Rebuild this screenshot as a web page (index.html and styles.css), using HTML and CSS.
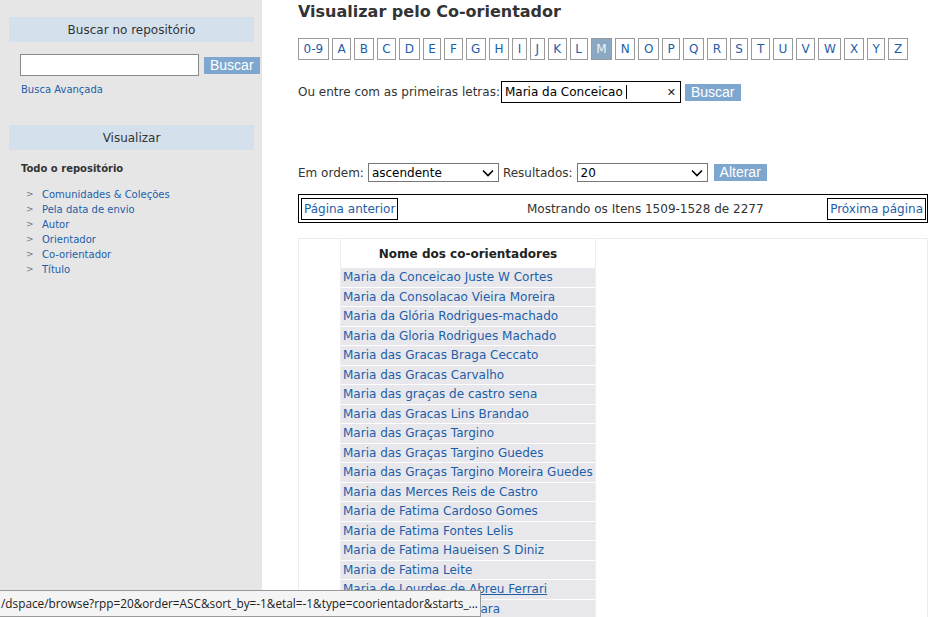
FILE: index.html
```html
<!DOCTYPE html>
<html lang="pt">
<head>
<meta charset="utf-8">
<title>Visualizar pelo Co-orientador</title>
<link rel="stylesheet" href="styles.css">
</head>
<body>
<div class="page">
  <aside class="sidebar">
    <h3 class="side-head">Buscar no repositório</h3>
    <div class="side-search">
      <input class="side-input" type="text">
      <button class="btn">Buscar</button>
    </div>
    <a class="adv" href="#">Busca Avançada</a>
    <h3 class="side-head side-head2">Visualizar</h3>
    <div class="side-sub">Todo o repositório</div>
    <ul class="side-list">
      <li><a href="#">Comunidades &amp; Coleções</a></li>
      <li><a href="#">Pela data de envio</a></li>
      <li><a href="#">Autor</a></li>
      <li><a href="#">Orientador</a></li>
      <li><a href="#">Co-orientador</a></li>
      <li><a href="#">Título</a></li>
    </ul>
  </aside>
  <main class="main">
    <h1 class="title">Visualizar pelo Co-orientador</h1>
    <div class="letters">
      <a href="#">0-9</a><a href="#">A</a><a href="#">B</a><a href="#">C</a><a href="#">D</a><a href="#">E</a><a href="#">F</a><a href="#">G</a><a href="#">H</a><a href="#">I</a><a href="#">J</a><a href="#">K</a><a href="#">L</a><a href="#" class="active">M</a><a href="#">N</a><a href="#">O</a><a href="#">P</a><a href="#">Q</a><a href="#">R</a><a href="#">S</a><a href="#">T</a><a href="#">U</a><a href="#">V</a><a href="#">W</a><a href="#">X</a><a href="#">Y</a><a href="#">Z</a>
    </div>
    <div class="starts">
      <span>Ou entre com as primeiras letras:</span>
      <div class="starts-input"><span class="val">Maria da Conceicao</span><span class="caret"></span><span class="clear">✕</span></div>
      <button class="btn">Buscar</button>
    </div>
    <div class="order">
      <span>Em ordem:</span>
      <div class="sel sel-order"><span>ascendente</span><svg width="12" height="8" viewBox="0 0 12 8"><path d="M1 1.5 L6 6.5 L11 1.5" fill="none" stroke="#000" stroke-width="1.6"/></svg></div>
      <span>Resultados:</span>
      <div class="sel sel-rpp"><span>20</span><svg width="12" height="8" viewBox="0 0 12 8"><path d="M1 1.5 L6 6.5 L11 1.5" fill="none" stroke="#000" stroke-width="1.6"/></svg></div>
      <button class="btn">Alterar</button>
    </div>
    <div class="nav">
      <a href="#" class="navlink">Página anterior</a>
      <span class="showing">Mostrando os Itens 1509-1528 de 2277</span>
      <a href="#" class="navlink">Próxima página</a>
    </div>
    <div class="results">
      <table class="names">
        <thead><tr><th>Nome dos co-orientadores</th></tr></thead>
        <tbody>
          <tr><td><a href="#">Maria da Conceicao Juste W Cortes</a></td></tr>
          <tr><td><a href="#">Maria da Consolacao Vieira Moreira</a></td></tr>
          <tr><td><a href="#">Maria da Glória Rodrigues-machado</a></td></tr>
          <tr><td><a href="#">Maria da Gloria Rodrigues Machado</a></td></tr>
          <tr><td><a href="#">Maria das Gracas Braga Ceccato</a></td></tr>
          <tr><td><a href="#">Maria das Gracas Carvalho</a></td></tr>
          <tr><td><a href="#">Maria das graças de castro sena</a></td></tr>
          <tr><td><a href="#">Maria das Gracas Lins Brandao</a></td></tr>
          <tr><td><a href="#">Maria das Graças Targino</a></td></tr>
          <tr><td><a href="#">Maria das Graças Targino Guedes</a></td></tr>
          <tr><td><a href="#">Maria das Graças Targino Moreira Guedes</a></td></tr>
          <tr><td><a href="#">Maria das Merces Reis de Castro</a></td></tr>
          <tr><td><a href="#">Maria de Fatima Cardoso Gomes</a></td></tr>
          <tr><td><a href="#">Maria de Fatima Fontes Lelis</a></td></tr>
          <tr><td><a href="#">Maria de Fatima Haueisen S Diniz</a></td></tr>
          <tr><td><a href="#">Maria de Fatima Leite</a></td></tr>
          <tr><td><a href="#" class="ul">Maria de Lourdes de Abreu Ferrari</a></td></tr>
          <tr><td><a href="#">Maria de Lourdes Massara</a></td></tr>
        </tbody>
      </table>
    </div>
  </main>
</div>
<div class="status">/dspace/browse?rpp=20&amp;order=ASC&amp;sort_by=-1&amp;etal=-1&amp;type=coorientador&amp;starts_...</div>
</body>
</html>
```

FILE: styles.css
```css
html, body {
  margin: 0;
  padding: 0;
  height: 100%;
  overflow: hidden;
  background: #fff;
}
body {
  font-family: "DejaVu Sans", Verdana, sans-serif;
  color: #333;
  font-size: 12px;
}
a { color: #1d5ea8; text-decoration: none; }
.page {
  display: flex;
  min-height: 617px;
}
.sidebar {
  width: 262px;
  flex: 0 0 262px;
  background: #e6e6e6;
  padding-top: 17px;
  box-sizing: border-box;
}
.side-head {
  margin: 0 8px 0 9px;
  height: 25px;
  line-height: 26px;
  background: #d4e1ec;
  text-align: center;
  font-weight: normal;
  font-size: 12px;
  color: #333;
}
.side-search {
  display: flex;
  align-items: center;
  margin: 12px 0 0 20px;
}
.side-input {
  width: 179px;
  height: 22px;
  box-sizing: border-box;
  border: 1px solid #8a8a8a;
  padding: 0;
  margin: 0 5px 0 0;
  background: #fff;
}
.btn {
  background: #7ea7cf;
  color: #fff;
  border: none;
  font-family: "Liberation Sans", Arial, sans-serif;
  font-size: 14px;
  height: 17px;
  line-height: 17px;
  padding: 0 6px;
  margin: 0;
}
.adv {
  display: block;
  margin: 7px 0 0 21px;
  font-size: 10px;
  line-height: 13px;
}
.side-head2 { margin-top: 29px; }
.side-sub {
  margin: 12px 0 0 21px;
  font-weight: bold;
  font-size: 10px;
  line-height: 14px;
}
.side-list {
  list-style: none;
  margin: 11px 0 0 0;
  padding: 0 0 0 26px;
}
.side-list li {
  font-size: 10px;
  line-height: 15px;
  display: flex;
}
.side-list li::before {
  content: ">";
  color: #777;
  width: 16px;
  font-size: 9px;
}
.main {
  flex: 1;
  padding-left: 36px;
  padding-right: 9px;
}
.title {
  margin: 1px 0 0 0;
  font-size: 16px;
  line-height: 22px;
  color: #333;
}
.letters {
  display: flex;
  gap: 3px;
  margin-top: 15px;
}
.letters a {
  display: block;
  flex: 0 0 auto;
  white-space: nowrap;
  border: 1px solid #9a9a9a;
  height: 20px;
  line-height: 20px;
  padding: 0 4.6px;
  font-size: 12px;
  color: #1d5ea8;
}
.letters a.active {
  background: #8aa8c2;
  color: #eef3f8;
}
.starts {
  display: flex;
  align-items: center;
  margin-top: 21px;
  font-size: 12px;
}
.starts-input {
  display: flex;
  align-items: center;
  width: 180px;
  height: 22px;
  box-sizing: border-box;
  border: 1px solid #000;
  margin: 0 4px 0 1px;
  padding: 0 4px 0 3px;
  color: #000;
}
.starts-input .caret {
  width: 1px;
  height: 14px;
  background: #000;
  margin-left: 3px;
}
.starts-input .clear {
  margin-left: auto;
  font-size: 11px;
  color: #222;
}
.order {
  display: flex;
  align-items: center;
  gap: 4px;
  margin-top: 60px;
  font-size: 12px;
}
.sel {
  display: flex;
  align-items: center;
  justify-content: space-between;
  height: 19px;
  box-sizing: border-box;
  border: 1px solid #777;
  padding: 0 4px 0 3px;
  color: #000;
  background: #fff;
}
.sel-order { width: 131px; }
.sel-rpp { width: 131px; }
.order .btn { margin-left: 2px; }
.nav {
  display: flex;
  align-items: center;
  margin-top: 12px;
  height: 29px;
  box-sizing: border-box;
  border: 1px solid #000;
  padding: 0 1px 0 2px;
  width: 630px;
  font-size: 12px;
}
.showing {
  flex: 1;
  text-align: center;
  padding-left: 65px;
}
.navlink {
  border: 1px solid #000;
  padding: 0 2px;
  height: 20px;
  line-height: 20px;
}
.results {
  margin-top: 15px;
  width: 630px;
  box-sizing: border-box;
  border: 1px solid #ececec;
  border-bottom: none;
  padding: 0 0 0 41px;
  height: 400px;
}
.names {
  border-collapse: separate;
  border-spacing: 0 1px;
  width: 256px;
  border-left: 1px solid #efefef;
  border-right: 1px solid #efefef;
}
.names th {
  font-size: 12px;
  font-weight: bold;
  height: 27px;
  padding: 0;
  text-align: center;
  color: #222;
}
.names td {
  background: #e8e8ec;
  height: 18.5px;
  padding: 0 0 0 2px;
  font-size: 12px;
  white-space: nowrap;
}
.names a.ul { text-decoration: underline; }
.status {
  position: fixed;
  left: 0;
  bottom: 0;
  width: 481px;
  height: 27px;
  box-sizing: border-box;
  background: #f4f4f4;
  border: 1px solid #9a9a9a;
  border-left: none;
  padding: 0 0 0 1px;
  line-height: 25px;
  font-family: "Open Sans", "Liberation Sans", sans-serif;
  font-size: 11.8px;
  color: #222;
  white-space: nowrap;
  overflow: hidden;
}
```
